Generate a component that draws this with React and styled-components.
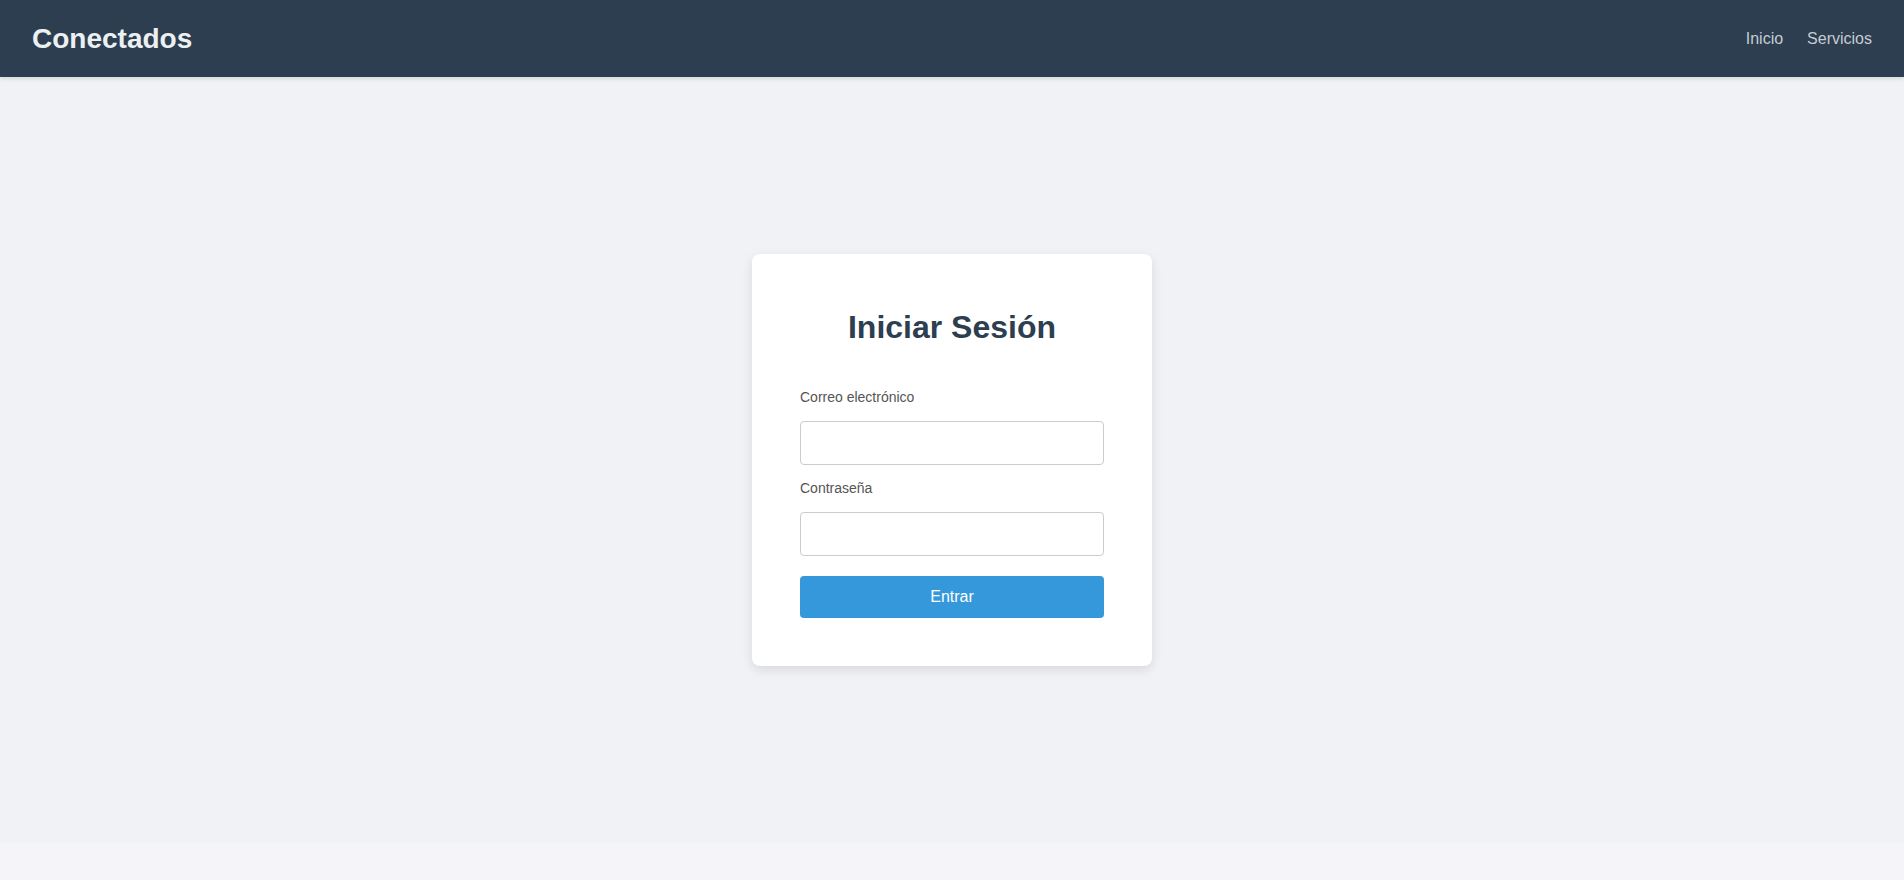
import styled, { createGlobalStyle } from "styled-components"

const GlobalStyle = createGlobalStyle`
* { box-sizing: border-box; }
body {
  margin: 0;
  background-color: #f4f4f9;
  font-family: "Liberation Sans", Arial, sans-serif;
}
`

const Header = styled.header`
height: 77px;
display: flex;
align-items: center;
justify-content: space-between;
padding: 0 32px;
background-color: #2c3e50;
box-shadow: 0 2px 4px rgba(0, 0, 0, 0.1);
position: relative;
z-index: 1;
`

const Logo = styled.h1`
margin: 0;
font-size: 28px;
font-weight: bold;
color: #ecf0f1;
`

const Nav = styled.nav`
display: flex;
gap: 24px;
`

const NavLink = styled.a`
font-size: 16px;
color: #c5ccd2;
text-decoration: none;
cursor: pointer;
&:hover{
    color: white;
}
`

const Main = styled.main`
height: 766px;
display: flex;
align-items: center;
justify-content: center;
background-color: #f0f2f5;
`

const Card = styled.div`
width: 400px;
padding: 48px;
background-color: white;
border-radius: 8px;
box-shadow: 0 4px 12px rgba(0, 0, 0, 0.1);
`

const Title = styled.h2`
margin: 7px 0 43px;
font-size: 32px;
text-align: center;
color: #2c3e50;
`

const Form = styled.form`
display: flex;
flex-direction: column;
`

const Group = styled.div`
display: flex;
flex-direction: column;
margin-bottom: ${({last}) => last ? "20px" : "15px"};
`

const Label = styled.label`
font-size: 14px;
color: #555;
margin-bottom: 16px;
`

const Input = styled.input`
width: 100%;
height: 44px;
padding: 12px;
font-size: 16px;
font-family: inherit;
border: 1px solid #ccc;
border-radius: 4px;
outline: none;
&:focus{
    border-color: #3498db;
}
`

const Submit = styled.button`
width: 100%;
height: 42px;
border: none;
border-radius: 4px;
background-color: #3498db;
color: white;
font-size: 16px;
font-family: inherit;
cursor: pointer;
&:hover{
    opacity: .9;
}
`

const App = () => {
  return (
    <>
    <GlobalStyle />
    <Header>
        <Logo>Conectados</Logo>
        <Nav>
            <NavLink>Inicio</NavLink>
            <NavLink>Servicios</NavLink>
        </Nav>
    </Header>
    <Main>
        <Card>
            <Title>Iniciar Sesión</Title>
            <Form onSubmit={(e)=> e.preventDefault()}>
                <Group>
                    <Label htmlFor="email">Correo electrónico</Label>
                    <Input id="email" type="email" />
                </Group>
                <Group last>
                    <Label htmlFor="password">Contraseña</Label>
                    <Input id="password" type="password" />
                </Group>
                <Submit type="submit">Entrar</Submit>
            </Form>
        </Card>
    </Main>
    </>
  )
}

export default App
